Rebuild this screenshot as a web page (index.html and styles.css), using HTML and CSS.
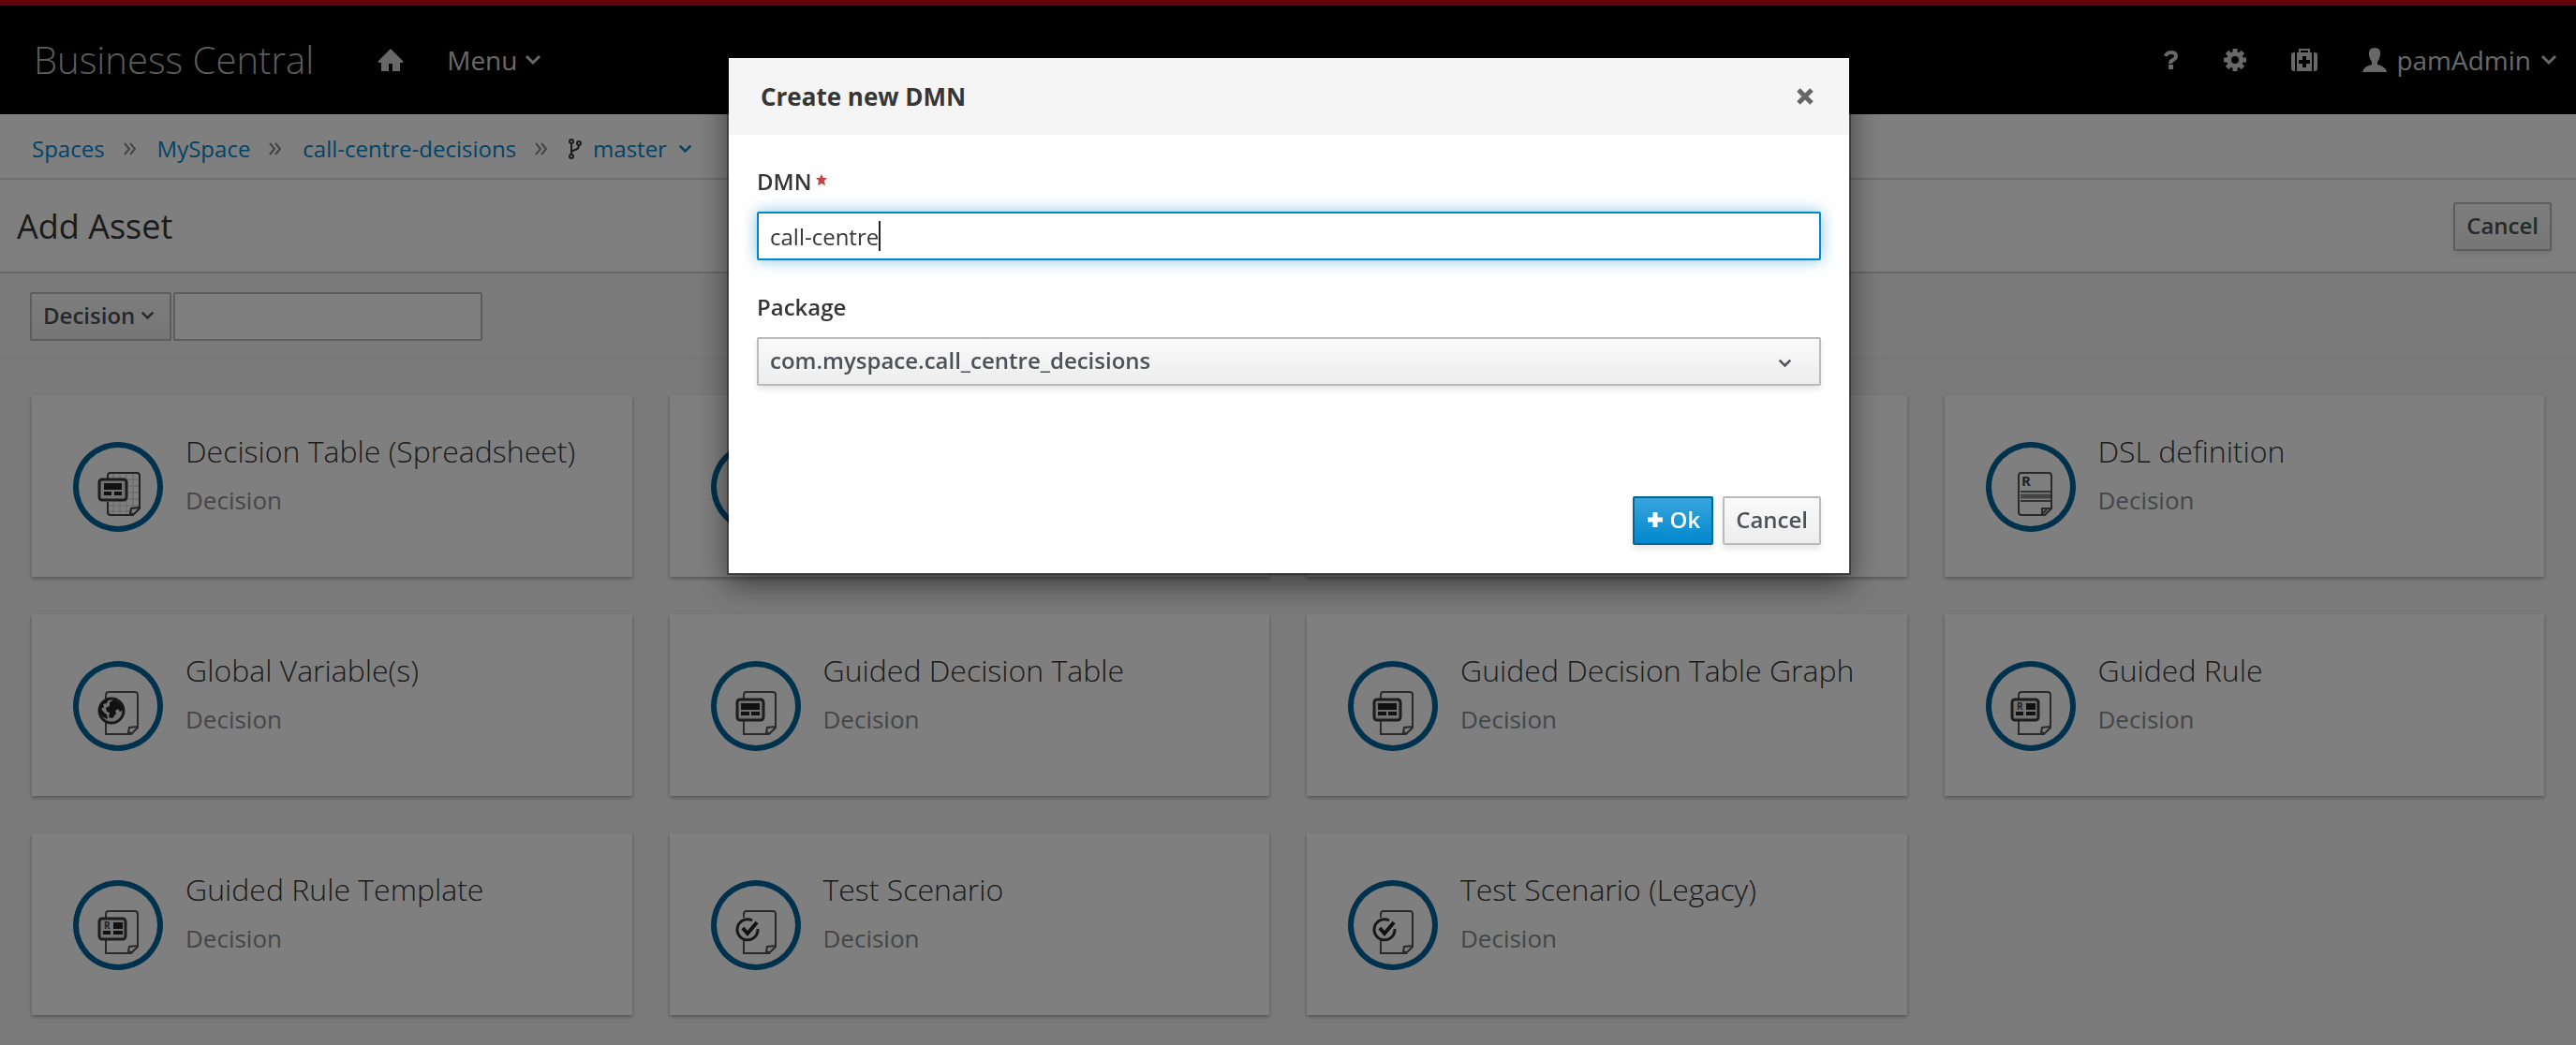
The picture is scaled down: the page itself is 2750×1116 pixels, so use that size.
FILE: index.html
```html
<!DOCTYPE html>
<html lang="en">
<head>
<meta charset="utf-8">
<title>Business Central</title>
<link rel="stylesheet" href="styles.css">
</head>
<body>
<svg class="defs" aria-hidden="true">
  <symbol id="chevron" viewBox="0 0 18 12"><path d="M2 2l7 7 7-7" fill="none" stroke="currentColor" stroke-width="3"/></symbol>
  <symbol id="page" viewBox="0 0 96 96"><path d="M35 40v-4q0-3 3-3h28q3 0 3 3v35l-7 7H35V64M62 77l-3-1 1-5 9-1" fill="none" stroke="#555" stroke-width="2"/></symbol>
  <symbol id="table" viewBox="0 0 96 96"><use href="#page"/><rect x="28" y="41" width="28" height="22" rx="3" fill="#e4e4e4" stroke="#3a3a3a" stroke-width="3"/><path d="M32 45h20v7H32zM32 54h9v4h-9zM43 54h9v4h-9z" fill="#222"/></symbol>
  <symbol id="sheet" viewBox="0 0 96 96"><path d="M43 34v43M50 34v43M57 34v43M64 34v37M37 40h33M37 47h33M37 54h33M37 61h33M37 68h33M37 74h27" stroke="#ccc" fill="none"/><path d="M37 39v-3q0-3 3-3h28q3 0 3 3v35l-7 7H40q-3 0-3-3V64M64 77l-3-1 1-5 9-1" fill="none" stroke="#444" stroke-width="2"/><rect x="28" y="40" width="29" height="22" rx="3" fill="#e4e4e4" stroke="#3a3a3a" stroke-width="3"/><path d="M33 44h19v7H33zM33 53h8v4h-8zM44 53h8v4h-8z" fill="#222"/></symbol>
  <symbol id="dsl" viewBox="0 0 96 96"><path d="M38 33h29q3 0 3 3v35l-7 7H38q-3 0-3-3V36q0-3 3-3zM60 77v-6h9M60 77l5-5" fill="none" stroke="#555" stroke-width="2"/><path d="M37 53h32M37 63h32" stroke="#666" stroke-width="2"/><path d="M37 58h32" stroke="#888" stroke-width="5"/></symbol>
  <symbol id="globe" viewBox="0 0 96 96"><use href="#page"/><circle cx="41" cy="53" r="13" fill="#e4e4e4" stroke="#333" stroke-width="3"/><path d="M39 44l5-3 6 4 4 7-4 2-2-3-3 2 1 3-4 5-4-1 1-5-3-1-1-4 4-2zM29 49l4-7 5-1-2 4-4 1 1 3-3 2 3 4 3 2 1 5-5-2-4-6z" fill="#222"/></symbol>
  <symbol id="rule" viewBox="0 0 96 96"><use href="#page"/><rect x="28" y="41" width="28" height="22" rx="3" fill="#e4e4e4" stroke="#3a3a3a" stroke-width="3"/><path d="M43 45h10v7H43zM32 54h8v4h-8zM43 54h10v4H43z" fill="#222"/></symbol>
  <symbol id="test" viewBox="0 0 96 96"><use href="#page"/><circle cx="39" cy="53" r="12" fill="#fff"/><path d="M44 43a11 11 0 1 0 6 9" fill="none" stroke="#333" stroke-width="3"/><path d="M34 51l5 6 10-12" fill="none" stroke="#222" stroke-width="4"/></symbol>
</svg>

<header class="masthead">
  <a class="brand" href="#">Business Central</a>
  <a class="home" href="#" aria-label="Home"><svg width="28" height="24" viewBox="0 0 28 24"><path d="M14 0L28 14l-2 1h-2v9h-8v-8h-4v8H4v-9H2l-2-1z" fill="currentColor"/></svg></a>
  <button class="nav" type="button">Menu<svg width="18" height="12"><use href="#chevron"/></svg></button>
  <nav class="tools">
    <button class="nav" type="button" aria-label="Help"><svg width="16" height="20" viewBox="0 0 16 20"><path d="M2 6Q3 2 8 2q5 0 5 4 0 2-3 4-3 1-3 4" fill="none" stroke="currentColor" stroke-width="4"/><path d="M5 15h5v5H5z" fill="currentColor"/></svg></button>
    <button class="nav" type="button" aria-label="Settings"><svg width="24" height="24" viewBox="0 0 24 24"><circle cx="12" cy="12" r="6.500" fill="none" stroke="currentColor" stroke-width="5"/><path d="M12 0v5M12 19v5M0 12h5M19 12h5M3.500 3.500l3 3M17.500 17.500l3 3M3.500 20.500l3-3M17.500 6.500l3-3" stroke="currentColor" stroke-width="5"/></svg></button>
    <button class="nav" type="button" aria-label="Administration"><svg width="28" height="24" viewBox="0 0 28 24"><path d="M9 5V1h10v4" fill="none" stroke="currentColor" stroke-width="2"/><path d="M4 4v20H3q-3 0-3-3V7q0-3 3-3zM24 4v20h1q3 0 3-3V7q0-3-3-3zM6 4h16v20H6zM12 8v4H8v4h4v4h4v-4h4v-4h-4V8z" fill="currentColor" fill-rule="evenodd"/></svg></button>
    <button class="nav user" type="button"><svg width="26" height="26" viewBox="0 0 26 26"><path d="M13 0q7 0 6 8-1 5-3 7v3q9 2 10 8H0q1-6 10-8v-3q-2-2-3-7-1-8 6-8z" fill="currentColor"/></svg>pamAdmin<svg width="18" height="12"><use href="#chevron"/></svg></button>
  </nav>
</header>

<nav class="crumbs" aria-label="Breadcrumb">
  <a href="#">Spaces</a><svg class="sep" width="14" height="14" viewBox="0 0 14 14"><path d="M1 1l5 6-5 6M7 1l5 6-5 6"/></svg>
  <a href="#">MySpace</a><svg class="sep" width="14" height="14" viewBox="0 0 14 14"><path d="M1 1l5 6-5 6M7 1l5 6-5 6"/></svg>
  <a href="#">call-centre-decisions</a><svg class="sep" width="14" height="14" viewBox="0 0 14 14"><path d="M1 1l5 6-5 6M7 1l5 6-5 6"/></svg>
  <a class="branch" href="#"><svg class="fork" width="14" height="22" viewBox="0 0 14 22"><circle cx="3" cy="3" r="2"/><circle cx="3" cy="19" r="2"/><circle cx="11" cy="5" r="2"/><path d="M3 5v12M11 7q0 4-4 5t-4 3"/></svg>master<svg width="15" height="10"><use href="#chevron"/></svg></a>
</nav>

<main>
  <div class="heading"><h1>Add Asset</h1><button class="btn" type="button">Cancel</button></div>
  <div class="filter"><button class="btn flat" type="button">Decision<svg width="15" height="10"><use href="#chevron"/></svg></button><input class="search" type="text" aria-label="Filter assets"></div>
  <section class="grid">
    <article class="card"><svg class="icon" viewBox="0 0 96 96"><use href="#sheet"/></svg><div><h2>Decision Table (Spreadsheet)</h2><p>Decision</p></div></article>
    <article class="card"><svg class="icon" viewBox="0 0 96 96"></svg></article>
    <article class="card"><svg class="icon" viewBox="0 0 96 96"></svg></article>
    <article class="card"><svg class="icon" viewBox="0 0 96 96"><use href="#dsl"/><text class="glyph" x="38" y="47" font-size="15">R</text></svg><div><h2>DSL definition</h2><p>Decision</p></div></article>
    <article class="card"><svg class="icon" viewBox="0 0 96 96"><use href="#globe"/></svg><div><h2>Global Variable(s)</h2><p>Decision</p></div></article>
    <article class="card"><svg class="icon" viewBox="0 0 96 96"><use href="#table"/></svg><div><h2>Guided Decision Table</h2><p>Decision</p></div></article>
    <article class="card"><svg class="icon" viewBox="0 0 96 96"><use href="#table"/></svg><div><h2>Guided Decision Table Graph</h2><p>Decision</p></div></article>
    <article class="card"><svg class="icon" viewBox="0 0 96 96"><use href="#rule"/><text class="glyph" x="33" y="52" font-size="10">R</text></svg><div><h2>Guided Rule</h2><p>Decision</p></div></article>
    <article class="card"><svg class="icon" viewBox="0 0 96 96"><use href="#rule"/><text class="glyph" x="33" y="52" font-size="10">R</text></svg><div><h2>Guided Rule Template</h2><p>Decision</p></div></article>
    <article class="card"><svg class="icon" viewBox="0 0 96 96"><use href="#test"/></svg><div><h2>Test Scenario</h2><p>Decision</p></div></article>
    <article class="card"><svg class="icon" viewBox="0 0 96 96"><use href="#test"/></svg><div><h2>Test Scenario (Legacy)</h2><p>Decision</p></div></article>
  </section>
</main>

<div class="backdrop">
  <form class="modal" role="dialog" aria-modal="true" aria-labelledby="dialog-title">
    <header class="modal-head"><h2 id="dialog-title">Create new DMN</h2><button class="close" type="button" aria-label="Close"><svg width="18" height="18" viewBox="0 0 18 18"><path d="M2 2l14 14M16 2L2 16" stroke="currentColor" stroke-width="5"/></svg></button></header>
    <div class="modal-body">
      <label for="name">DMN<svg class="star" width="12" height="12" viewBox="0 0 12 12"><path d="M6 0l2 4 4 0-3 3 1 5-4-2-4 2 1-5-3-3 4 0z" fill="currentColor"/></svg></label>
      <div class="field"><input id="name" type="text" value="call-centre" required><span class="caret"></span></div>
      <label for="package">Package</label>
      <div class="field"><select id="package"><option>com.myspace.call_centre_decisions</option></select><svg class="arrow" width="15" height="10"><use href="#chevron"/></svg></div>
    </div>
    <footer class="modal-foot"><button class="btn primary" type="submit"><svg width="20" height="20" viewBox="0 0 20 20"><path d="M10 2v16M2 10h16" stroke="currentColor" stroke-width="5"/></svg>Ok</button><button class="btn" type="button">Cancel</button></footer>
  </form>
</div>
</body>
</html>
```
FILE: styles.css
```css
* { box-sizing: border-box; }
body {
  margin: 0;
  min-height: 100vh;
  background: #f5f5f5;
  color: #363636;
  font: 24px/40px "Open Sans", "Noto Sans", sans-serif;
}
h1, h2, p { margin: 0; font-weight: 400; }
a { color: #0088ce; text-decoration: none; }
button, input, select { font: inherit; color: inherit; }
svg { flex: none; }
.defs { position: absolute; width: 0; height: 0; }
.glyph { font-family: "Open Sans", sans-serif; font-weight: 700; fill: #444; }

.masthead {
  display: flex;
  align-items: center;
  height: 122px;
  padding: 0 20px 0 36px;
  border-top: 6px solid #c60412;
  background: #000;
  color: #d1d1d1;
}
.brand { color: #b8b8b8; font-size: 40px; font-weight: 300; }
.home { display: flex; margin: 0 46px 0 68px; color: inherit; }
.nav {
  display: flex;
  align-items: center;
  gap: 8px;
  padding: 0;
  border: 0;
  background: none;
  font-size: 28px;
}
.tools { display: flex; align-items: center; gap: 48px; margin-left: auto; }
.user { gap: 10px; }

.crumbs {
  display: flex;
  align-items: center;
  gap: 20px;
  height: 70px;
  padding: 6px 34px 0;
  border-bottom: 2px solid #ddd;
  background: #fff;
}
.sep { margin-right: 2px; fill: none; stroke: #888; stroke-width: 2; }
.branch { display: flex; align-items: center; gap: 12px; }
.fork { fill: none; stroke: #363636; stroke-width: 2; }

.heading {
  display: flex;
  align-items: center;
  justify-content: space-between;
  height: 100px;
  padding: 2px 26px 0 18px;
  border-bottom: 2px solid #d1d1d1;
  background: #fff;
}
h1 { font-size: 36px; }
.btn {
  display: flex;
  align-items: center;
  gap: 6px;
  height: 52px;
  padding: 0 12px 2px;
  border: 2px solid #bbb;
  border-radius: 2px;
  background: linear-gradient(#fafafa, #ededed);
  box-shadow: 0 4px 6px rgba(3, 3, 3, .1);
  color: #4d5258;
  font-weight: 600;
}
.flat { padding-right: 16px; box-shadow: none; }
.primary {
  border-color: #00659c;
  background: linear-gradient(#39a5dc, #0088ce);
  color: #fff;
}
.filter {
  display: flex;
  gap: 2px;
  padding: 20px 32px 18px;
  border-bottom: 2px solid #ededed;
}
.search {
  width: 330px;
  height: 52px;
  border: 2px solid #bbb;
  border-radius: 2px;
  background: #fff;
}

.grid {
  display: grid;
  grid-template-columns: repeat(4, 1fr);
  gap: 40px;
  padding: 38px 34px 32px;
}
.card {
  display: flex;
  gap: 24px;
  height: 194px;
  padding: 42px 44px;
  background: #fff;
  box-shadow: 0 2px 4px rgba(3, 3, 3, .3);
}
.icon {
  width: 96px;
  height: 96px;
  margin-top: 8px;
  border-radius: 50%;
  box-shadow: inset 0 0 0 6px #00659c;
}
.card h2 { margin-bottom: 16px; font-size: 32px; line-height: 36px; font-weight: 300; }
.card p { color: #8b8d8f; font-size: 26px; line-height: 36px; }

.backdrop {
  position: fixed;
  inset: 0;
  display: flex;
  align-items: flex-start;
  justify-content: center;
  padding: 60px 0 0 2px;
  background: rgba(0, 0, 0, .5);
}
.modal {
  width: 1200px;
  max-width: 100%;
  border: 2px solid rgba(0, 0, 0, .4);
  background: #fff;
  background-clip: padding-box;
  box-shadow: 0 10px 30px rgba(0, 0, 0, .5);
}
.modal-head {
  display: flex;
  align-items: center;
  justify-content: space-between;
  height: 82px;
  padding: 0 38px 0 34px;
  background: #f5f5f5;
}
.modal-head h2 { font-size: 26px; font-weight: 700; }
.close { display: flex; padding: 0; border: 0; background: none; color: #666; }
.modal-body { padding: 30px 30px 0; }
.modal-body label { display: flex; gap: 4px; margin-bottom: 12px; font-weight: 600; }
.star { margin-top: 12px; color: #c04848; }
.field { position: relative; margin-bottom: 30px; }
.field input, .field select {
  display: block;
  width: 100%;
  height: 52px;
  padding: 0 12px;
  border: 2px solid #0088ce;
  border-radius: 2px;
  outline: 0;
  background: #fff;
}
.field input { box-shadow: 0 0 16px rgba(0, 136, 206, .5); }
.field select {
  appearance: none;
  padding-bottom: 2px;
  border-color: #bbb;
  background: linear-gradient(#fafafa, #ededed);
  box-shadow: 0 4px 6px rgba(3, 3, 3, .1);
  color: #4d5258;
  font-weight: 600;
}
.caret { position: absolute; left: 130px; top: 10px; width: 2px; height: 32px; background: #222; }
.arrow { position: absolute; right: 31px; top: 23px; color: #4d5258; }
.modal-foot { display: flex; justify-content: flex-end; gap: 10px; padding: 88px 30px 30px; }
```
